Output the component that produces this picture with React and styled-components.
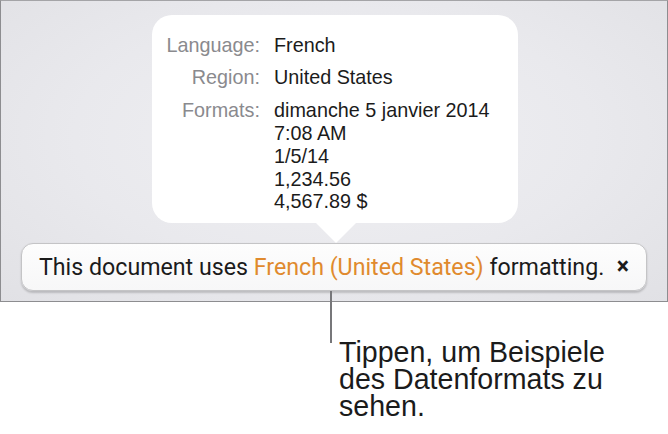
import styled, { createGlobalStyle } from "styled-components";

const GlobalStyle = createGlobalStyle`
  html, body {
    margin: 0;
    padding: 0;
    background: #fff;
  }
  body {
    font-family: "Liberation Sans", Arial, sans-serif;
    color: #1b1b1b;
  }
`;

const Page = styled.div`
  position: relative;
  width: 668px;
  height: 434px;
  overflow: hidden;
`;

const Screen = styled.div`
  box-sizing: border-box;
  width: 668px;
  height: 302px;
  border: 1px solid #8d8d90;
  border-top-color: #a4a4a7;
  background: radial-gradient(ellipse at 50% 45%, #f0f0f3 0%, #e9e9ed 55%, #e1e1e5 100%);
  display: flex;
  flex-direction: column;
  align-items: center;
  padding-top: 14px;
`;

const Popover = styled.div`
  box-sizing: border-box;
  width: 366px;
  height: 208px;
  margin-left: 2px;
  background: #fff;
  border-radius: 20px;
  padding: 19px 0 0 14px;
  display: grid;
  grid-template-columns: 94px auto;
  column-gap: 14px;
  align-content: start;
`;

const Arrow = styled.div`
  width: 0;
  height: 0;
  margin-left: 4px;
  border-left: 20px solid transparent;
  border-right: 20px solid transparent;
  border-top: 20px solid #fff;
`;

const Label = styled.div`
  text-align: right;
  color: #8a8a8e;
  font-size: 19.8px;
  line-height: 22.7px;
  margin-bottom: ${(p) => p.$gap || 0}px;
  white-space: nowrap;
`;

const Value = styled.div`
  color: #1b1b1b;
  font-size: 19.8px;
  line-height: 22.7px;
  margin-bottom: ${(p) => p.$gap || 0}px;
  white-space: nowrap;
`;

const Banner = styled.div`
  box-sizing: border-box;
  width: 626px;
  height: 48px;
  background: linear-gradient(#fdfdfd, #f7f7f8);
  border: 1px solid #c4c4c6;
  border-radius: 12px;
  box-shadow: 0 1.5px 2px rgba(0, 0, 0, 0.18);
  display: flex;
  align-items: center;
  padding: 0 17px 1px 17px;
  font-family: Roboto, "Liberation Sans", sans-serif;
  font-size: 23.2px;
  letter-spacing: 0;
  color: #1b1b1b;
`;

const Message = styled.span`
  flex: 1;
  white-space: nowrap;
`;

const Highlight = styled.span`
  color: #e08a2e;
`;

const Close = styled.span`
  font-size: 23px;
  font-weight: 700;
  line-height: 1;
`;

const Leader = styled.div`
  position: absolute;
  left: 330px;
  top: 291px;
  width: 1.5px;
  height: 52px;
  background: #77777a;
`;

const Note = styled.p`
  margin: 36.5px 0 0 339px;
  font-size: 28.6px;
  line-height: 27px;
  color: #1b1b1b;
  width: 310px;
`;

const rows = [
  { label: "Language:", values: ["French"], gap: 9.5 },
  { label: "Region:", values: ["United States"], gap: 10.5 },
  {
    label: "Formats:",
    values: ["dimanche 5 janvier 2014", "7:08 AM", "1/5/14", "1,234.56", "4,567.89 $"],
    gap: 0,
  },
];

export default function App() {
  return (
    <Page>
      <GlobalStyle />
      <Screen>
        <Popover>
          {rows.flatMap((r) => [
            <Label key={r.label + "l"} $gap={r.gap}>{r.label}</Label>,
            <Value key={r.label + "v"} $gap={r.gap}>
              {r.values.map((v) => (
                <div key={v}>{v}</div>
              ))}
            </Value>,
          ])}
        </Popover>
        <Arrow />
        <Banner>
          <Message>
            This document uses <Highlight>French (United States)</Highlight> formatting.
          </Message>
          <Close>×</Close>
        </Banner>
      </Screen>
      <Leader />
      <Note>
        Tippen, um Beispiele des Datenformats zu sehen.
      </Note>
    </Page>
  );
}
